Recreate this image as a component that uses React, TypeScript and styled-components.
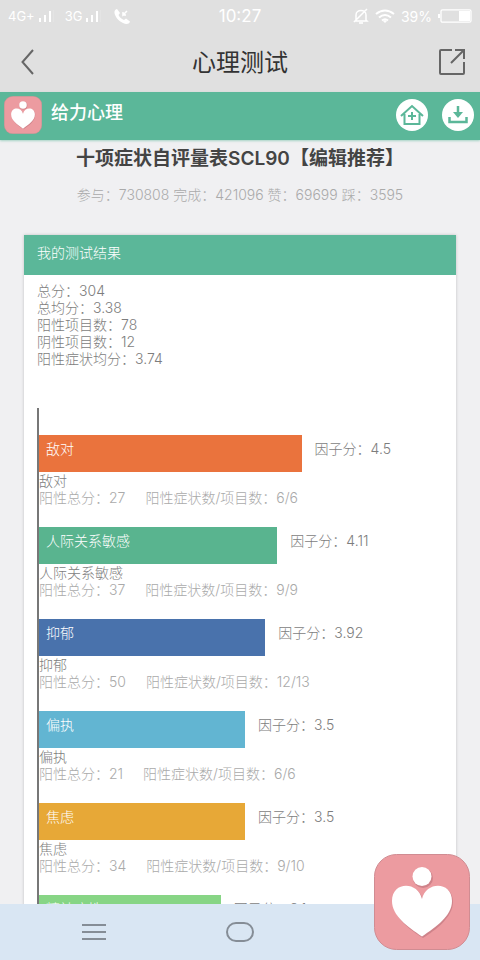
import React from 'react';
import styled, { createGlobalStyle } from 'styled-components';

const GlobalStyle = createGlobalStyle`
  * { box-sizing: border-box; }
  body {
    margin: 0;
    font-family: Inter, 'Noto Sans CJK SC', sans-serif;
    font-size: 14px;
    font-weight: 300;
    line-height: 17px;
    color: #7d7d7d;
    background: #f0f0f2;
  }
  h1, h2, p, ul, dl, dd { margin: 0; padding: 0; }
  svg { display: block; }
`;

const Screen = styled.div`
  position: relative;
  display: flex;
  flex-direction: column;
  height: 100vh;
  overflow: hidden;
`;

const StatusBar = styled.div`
  display: grid;
  grid-template-columns: 1fr auto 1fr;
  align-items: center;
  flex: none;
  height: 32px;
  padding: 0 8px;
  background: #e0e0e0;
  color: #fff;
  font-weight: 400;
`;

const StatusGroup = styled.div<{ $end?: boolean }>`
  display: flex;
  align-items: center;
  gap: ${(p) => (p.$end ? 6 : 10)}px;
  justify-content: ${(p) => (p.$end ? 'flex-end' : 'flex-start')};
`;

const Network = styled.span`
  display: flex;
  align-items: center;
  gap: 3px;
  font-size: 13px;
`;

const Clock = styled.time`
  font-size: 17px;
`;

const AppBar = styled.header`
  display: grid;
  grid-template-columns: 56px 1fr 56px;
  align-items: center;
  flex: none;
  height: 60px;
  background: #e0e0e0;
  color: #333;
`;

const AppTitle = styled.h1`
  padding-top: 2px;
  font-size: 24px;
  line-height: 32px;
  font-weight: 400;
  text-align: center;
`;

const IconButton = styled.button`
  display: grid;
  place-items: center;
  padding: 0;
  border: 0;
  background: none;
  color: #666;
`;

const SiteBar = styled.div`
  display: flex;
  align-items: center;
  flex: none;
  gap: 14px;
  height: 48px;
  padding: 0 6px 2px 4px;
  background: #5bb799;
  box-shadow: 0 1px 2px #5bb79980;
`;

const SiteName = styled.a`
  flex: 1;
  margin-bottom: 4px;
  color: #fff;
  font-size: 18px;
  line-height: 24px;
  font-weight: 500;
  text-decoration: none;
`;

const HeaderLogo = styled.div`
  width: 38px;
  margin-right: -5px;
`;

const RoundButton = styled(IconButton)`
  width: 32px;
  height: 32px;
  border-radius: 50%;
  background: #fff;
  color: #5bb799;
`;

const Content = styled.main`
  flex: 1;
  min-height: 0;
  overflow-y: auto;
  scrollbar-width: none;
  padding: 7px 24px 0;
`;

const TestTitle = styled.h2`
  color: #444;
  font-size: 19px;
  line-height: 24px;
  font-weight: 600;
  text-align: center;
  white-space: nowrap;
`;

const Stats = styled.p`
  margin-top: 15px;
  color: #aaa;
  text-align: center;
  white-space: nowrap;
`;

const Card = styled.section`
  margin-top: 32px;
  background: #fff;
  box-shadow: 0 0 3px #0003;
`;

const CardTitle = styled.h2`
  height: 40px;
  padding: 9px 13px;
  background: #5bb799;
  color: #fff;
  font-size: 14px;
  line-height: 17px;
  font-weight: 300;
`;

const CardBody = styled.div`
  padding: 7px 13px 14px;
`;

const Summary = styled.dl`
  display: flex;
  flex-direction: column;
`;

const SummaryLine = styled.div`
  display: flex;
`;

const Chart = styled.ul`
  margin-top: 41px;
  padding-top: 27px;
  border-left: 2px solid #777;
  list-style: none;
`;

const Factor = styled.li`
  height: 92px;
  white-space: nowrap;
`;

const BarRow = styled.div`
  display: flex;
  gap: 13px;
  height: 37px;
`;

const Bar = styled.div<{ $color: string }>`
  flex: none;
  padding: 5px 7px;
  background: ${(p) => p.$color};
  color: #fff;
`;

const Score = styled.span`
  padding-top: 5px;
`;

const Detail = styled.p`
  display: flex;
  gap: 20px;
  color: #aaa;
`;

const NavBar = styled.nav`
  display: grid;
  grid-template-columns: 1fr 106px 1fr;
  flex: none;
  height: 56px;
  background: #d9e6f3;
`;

const NavButton = styled(IconButton)`
  color: #858d96;
`;

const FloatingButton = styled.button`
  position: absolute;
  right: 10px;
  bottom: 10px;
  width: 96px;
  padding: 0;
  border: 0;
  background: none;
`;

const Logo = () => (
  <svg viewBox="0 0 96 96" width="100%" aria-hidden="true">
    <rect x=".5" y=".5" width="95" height="95" rx="22" fill="#ec9ba0" stroke="#d08c92" />
    <g fill="#a5606a" opacity=".4" transform="translate(1 1)">
      <circle cx="48" cy="23" r="10" />
      <path d="M48 45C44 27 18 27 18 47c0 15 17 28 30 36 13-8 30-21 30-36 0-20-26-20-30-2Z" />
    </g>
    <g fill="#fff">
      <circle cx="48" cy="22.500" r="9.500" />
      <path d="M48 45C44 27 18 27 18 47c0 15 16 26 30 35.500C62 73 78 62 78 47c0-20-26-20-30-2Z" />
    </g>
  </svg>
);

const Signal = () => (
  <svg width="17" height="14" fill="#fff" aria-hidden="true">
    <path d="M1 9h2v4H1zM6 6h2v7H6zM11 2h2v11h-2z" />
    <path d="M15 1h1v12h-1z" opacity=".15" />
  </svg>
);

const stats = '参与：730808 完成：421096 赞：69699 踩：3595';

const summary = [
  ['总分', '304'],
  ['总均分', '3.38'],
  ['阳性项目数', '78'],
  ['阴性项目数', '12'],
  ['阳性症状均分', '3.74'],
];

const factors = [
  { name: '敌对', score: '4.5', width: 65, color: '#ea733d', total: 27, items: '6/6' },
  { name: '人际关系敏感', score: '4.11', width: 59, color: '#59b48f', total: 37, items: '9/9' },
  { name: '抑郁', score: '3.92', width: 56, color: '#4972ac', total: 50, items: '12/13' },
  { name: '偏执', score: '3.5', width: 51, color: '#62b5d2', total: 21, items: '6/6' },
  { name: '焦虑', score: '3.5', width: 51, color: '#e7a837', total: 34, items: '9/10' },
  { name: '精神病性', score: '3.1', width: 45, color: '#87d585', total: 31, items: '9/10' },
];

export default function App() {
  return (
    <Screen>
      <GlobalStyle />
      <StatusBar>
        <StatusGroup>
          <Network>4G+<Signal /></Network>
          <Network>3G<Signal /></Network>
          <svg width="20" height="17" viewBox="0 0 20 17" aria-hidden="true">
            <path d="M5 1 8 5 6.500 7C8 10 10 11 12 12l2-1.500 4 3c-1 3-4 3-7 1.500C6 13 3 8 2.500 5 2.300 3 3 1.500 5 1Z" fill="#fff" />
            <path d="m15 3-4 4V4m0 3h3" fill="none" stroke="#fff" strokeWidth="1.500" />
          </svg>
        </StatusGroup>
        <Clock>10:27</Clock>
        <StatusGroup $end>
          <svg width="16" height="16" viewBox="0 0 16 16" fill="none" stroke="#fff" strokeWidth="1.500" aria-hidden="true">
            <path d="M3 12V7c0-6 10-6 10 0v5l1 1H2l1-1ZM1 14 14 1M6 15h4" />
          </svg>
          <svg width="20" height="15" viewBox="0 0 20 15" fill="none" stroke="#fff" strokeWidth="2" aria-hidden="true">
            <path d="M1 5q9-7 18 0M4 8.500q6-5 12 0M7 11.500q3-2.500 6 0" />
            <path d="m8 12 2 2 2-2-2-1Z" fill="#fff" strokeWidth="0" />
          </svg>
          <span>39%</span>
          <svg width="34" height="14" viewBox="0 0 34 14" fill="#fff" aria-hidden="true">
            <path d="M0 5h2v4H0z" />
            <rect x="3" y=".8" width="30" height="12.400" rx="1.500" fill="none" stroke="#fff" strokeWidth="1.300" />
            <path d="M21 2h11v10H21z" />
          </svg>
        </StatusGroup>
      </StatusBar>

      <AppBar>
        <IconButton aria-label="返回">
          <svg width="14" height="26" viewBox="0 0 14 26" fill="none" stroke="currentColor" strokeWidth="2">
            <path d="M12 1 1.500 13 12 25" />
          </svg>
        </IconButton>
        <AppTitle>心理测试</AppTitle>
        <IconButton aria-label="分享">
          <svg width="26" height="26" viewBox="0 0 26 26" fill="none" stroke="currentColor" strokeWidth="2">
            <path d="M13 1H2q-1 0-1 1v22q0 1 1 1h22q1 0 1-1V13M16 1h9v9M25 1 12 14" />
          </svg>
        </IconButton>
      </AppBar>

      <SiteBar>
        <HeaderLogo><Logo /></HeaderLogo>
        <SiteName href="#">给力心理</SiteName>
        <RoundButton aria-label="首页">
          <svg width="24" height="22" viewBox="0 0 24 22" fill="none" stroke="currentColor" strokeWidth="2">
            <path d="M1 12 12 2l11 10M4.500 10v10h15V10M12 8v8M8 12h8" />
          </svg>
        </RoundButton>
        <RoundButton aria-label="下载">
          <svg width="20" height="20" viewBox="0 0 20 20" fill="none" stroke="currentColor" strokeWidth="2.500">
            <path d="M1.500 12v5h17v-5M10 1v8" />
            <path d="M5 7h10l-5 6Z" fill="currentColor" strokeWidth="0" />
          </svg>
        </RoundButton>
      </SiteBar>

      <Content>
        <TestTitle>十项症状自评量表SCL90【编辑推荐】</TestTitle>
        <Stats>{stats}</Stats>
        <Card>
          <CardTitle>我的测试结果</CardTitle>
          <CardBody>
            <Summary>
              {summary.map(([label, value]) => (
                <SummaryLine key={label}>
                  <dt>{label}：</dt>
                  <dd>{value}</dd>
                </SummaryLine>
              ))}
            </Summary>
            <Chart>
              {factors.map((f) => (
                <Factor key={f.name}>
                  <BarRow>
                    <Bar $color={f.color} style={{ width: `${f.width}%` }}>{f.name}</Bar>
                    <Score>因子分：{f.score}</Score>
                  </BarRow>
                  <p>{f.name}</p>
                  <Detail>
                    <span>阳性总分：{f.total}</span>
                    <span>阳性症状数/项目数：{f.items}</span>
                  </Detail>
                </Factor>
              ))}
            </Chart>
          </CardBody>
        </Card>
      </Content>

      <NavBar>
        <NavButton aria-label="菜单">
          <svg width="24" height="18" viewBox="0 0 24 18" fill="none" stroke="currentColor" strokeWidth="2">
            <path d="M0 2h24M0 9h24M0 16h24" />
          </svg>
        </NavButton>
        <NavButton aria-label="主屏幕">
          <svg width="28" height="20" viewBox="0 0 28 20" fill="none" stroke="currentColor" strokeWidth="2">
            <rect x="1" y="1" width="26" height="18" rx="9" />
          </svg>
        </NavButton>
      </NavBar>
      <FloatingButton aria-label="给力心理">
        <Logo />
      </FloatingButton>
    </Screen>
  );
}
